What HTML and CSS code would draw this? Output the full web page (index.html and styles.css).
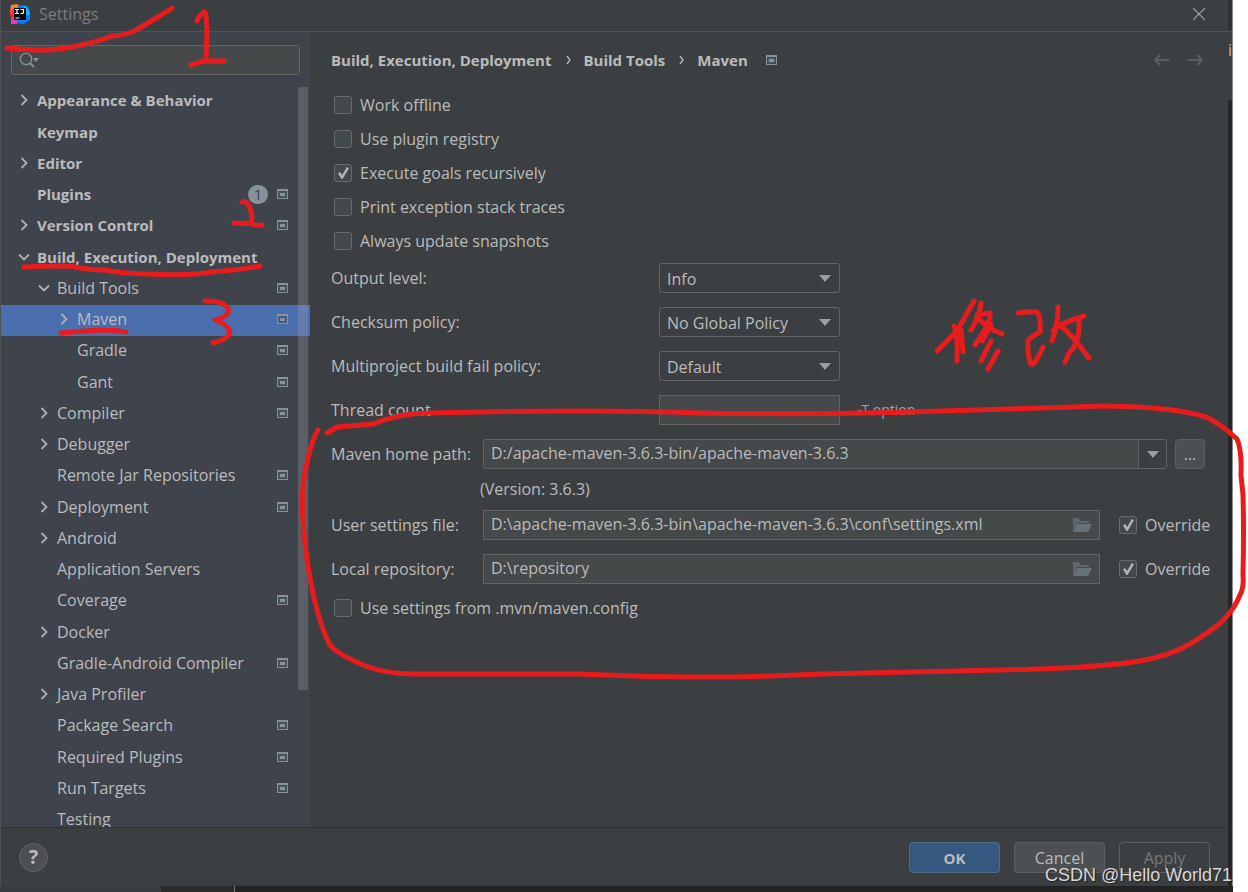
FILE: index.html
```
<!DOCTYPE html>
<html lang="en">
<head>
<meta charset="utf-8">
<title>Settings</title>
<link rel="stylesheet" href="styles.css">
</head>
<body>
<svg class="defs" aria-hidden="true">
  <symbol id="right" viewBox="0 0 12 12"><path d="M3.5 1l5 5-5 5" fill="none" stroke="currentColor" stroke-width="1.8"/></symbol>
  <symbol id="down" viewBox="0 0 12 12"><path d="M1 3.5l5 5 5-5" fill="none" stroke="currentColor" stroke-width="1.8"/></symbol>
  <symbol id="proj" viewBox="0 0 11 10"><path fill-rule="evenodd" d="M0 0h11v10H0zM1 2v7h9V2z" fill="#87939a"/><path d="M1.5 2.5h8v6h-8z" fill="#4a5660"/><path d="M3 4h5v3H3z" fill="#87939a"/></symbol>
  <symbol id="tri" viewBox="0 0 12 7"><path d="M0 0h12L6 7z" fill="#9c9fa1"/></symbol>
  <symbol id="folder" viewBox="0 0 19 14"><path d="M0 13V0h6l2 3h8v2H4z" fill="#5d686e"/><path d="M4 6h15l-4 8H0z" fill="#66727a"/></symbol>
</svg>
<div class="desktop">
  <main class="dialog">
    <header class="titlebar">
      <svg class="logo" viewBox="0 0 20 20"><path d="M1 1l6-1 5 3-4 7-7 2-1-4z" fill="#fc801d"/><path d="M0 8l5-5 3 14-6 2z" fill="#fe2857"/><path d="M1 14l8 2-2 4H1z" fill="#e13cc0"/><path d="M8 1l9 1 3 5v9l-7 4-6-1z" fill="#087cfa"/><path d="M13 1l5 3 2 6-3 2z" fill="#19b5f6"/><path d="M4 4h12v12H4z" fill="#0a0a0a"/><path d="M5 5.500h4M7 5.500v4M5 9.500h4M10.500 5.500h3v3q0 1-3 1M5.500 14h4" fill="none" stroke="#fff" stroke-width="1.200"/></svg>
      <h1>Settings</h1>
      <button class="close" aria-label="Close"><svg viewBox="0 0 12 12"><path d="M0 0l12 12M12 0L0 12" stroke="currentColor" stroke-width="1.2"/></svg></button>
    </header>
    <div class="middle">
      <aside class="sidebar">
        <div class="search">
          <svg viewBox="0 0 21 16"><circle cx="7" cy="7" r="5.7" fill="none" stroke="#87939a" stroke-width="1.3"/><path d="M11 11l4 4" stroke="#87939a" stroke-width="2"/><path d="M14 6h6l-3 4z" fill="#87939a"/></svg>
          <input type="text" aria-label="Search settings">
        </div>
        <ul class="tree">
          <li class="b"><svg class="ar"><use href="#right"/></svg><span>Appearance &amp; Behavior</span></li>
          <li class="b"><i class="ar"></i><span>Keymap</span></li>
          <li class="b"><svg class="ar"><use href="#right"/></svg><span>Editor</span></li>
          <li class="b"><i class="ar"></i><span>Plugins</span><em class="count">1</em><svg class="pj"><use href="#proj"/></svg></li>
          <li class="b"><svg class="ar"><use href="#right"/></svg><span>Version Control</span><svg class="pj"><use href="#proj"/></svg></li>
          <li class="b"><svg class="ar"><use href="#down"/></svg><span>Build, Execution, Deployment</span></li>
          <li class="l2"><svg class="ar"><use href="#down"/></svg><span>Build Tools</span><svg class="pj"><use href="#proj"/></svg></li>
          <li class="l3 sel"><svg class="ar"><use href="#right"/></svg><span>Maven</span><svg class="pj"><use href="#proj"/></svg></li>
          <li class="l3"><i class="ar"></i><span>Gradle</span><svg class="pj"><use href="#proj"/></svg></li>
          <li class="l3"><i class="ar"></i><span>Gant</span><svg class="pj"><use href="#proj"/></svg></li>
          <li class="l2"><svg class="ar"><use href="#right"/></svg><span>Compiler</span><svg class="pj"><use href="#proj"/></svg></li>
          <li class="l2"><svg class="ar"><use href="#right"/></svg><span>Debugger</span></li>
          <li class="l2"><i class="ar"></i><span>Remote Jar Repositories</span><svg class="pj"><use href="#proj"/></svg></li>
          <li class="l2"><svg class="ar"><use href="#right"/></svg><span>Deployment</span><svg class="pj"><use href="#proj"/></svg></li>
          <li class="l2"><svg class="ar"><use href="#right"/></svg><span>Android</span></li>
          <li class="l2"><i class="ar"></i><span>Application Servers</span></li>
          <li class="l2"><i class="ar"></i><span>Coverage</span><svg class="pj"><use href="#proj"/></svg></li>
          <li class="l2"><svg class="ar"><use href="#right"/></svg><span>Docker</span></li>
          <li class="l2"><i class="ar"></i><span>Gradle-Android Compiler</span><svg class="pj"><use href="#proj"/></svg></li>
          <li class="l2"><svg class="ar"><use href="#right"/></svg><span>Java Profiler</span></li>
          <li class="l2"><i class="ar"></i><span>Package Search</span><svg class="pj"><use href="#proj"/></svg></li>
          <li class="l2"><i class="ar"></i><span>Required Plugins</span><svg class="pj"><use href="#proj"/></svg></li>
          <li class="l2"><i class="ar"></i><span>Run Targets</span><svg class="pj"><use href="#proj"/></svg></li>
          <li class="l2"><i class="ar"></i><span>Testing</span></li>
        </ul>
        <div class="thumb"></div>
      </aside>
      <section class="content">
        <nav class="crumbs">
          <span>Build, Execution, Deployment</span><svg class="sep" viewBox="0 0 5 8"><path d="M1 0l3 4-3 4" fill="none" stroke="currentColor" stroke-width="1.3"/></svg>
          <span>Build Tools</span><svg class="sep" viewBox="0 0 5 8"><path d="M1 0l3 4-3 4" fill="none" stroke="currentColor" stroke-width="1.3"/></svg>
          <span>Maven</span><svg class="pj"><use href="#proj"/></svg>
          <button class="hist first" aria-label="Back"><svg viewBox="0 0 17 12"><path d="M16 6H2M7 1L2 6l5 5" fill="none" stroke="currentColor" stroke-width="2"/></svg></button>
          <button class="hist" aria-label="Forward"><svg viewBox="0 0 17 12"><path d="M1 6h14M10 1l5 5-5 5" fill="none" stroke="currentColor" stroke-width="2"/></svg></button>
        </nav>
        <div class="checks">
          <label class="check"><input type="checkbox"><span>Work offline</span></label>
          <label class="check"><input type="checkbox"><span>Use plugin registry</span></label>
          <label class="check"><input type="checkbox" checked><span>Execute goals recursively</span></label>
          <label class="check"><input type="checkbox"><span>Print exception stack traces</span></label>
          <label class="check"><input type="checkbox"><span>Always update snapshots</span></label>
        </div>
        <div class="policies">
          <label for="level">Output level:</label>
          <div class="pick"><select id="level"><option>Info</option></select><svg class="tri"><use href="#tri"/></svg></div>
          <label for="sum">Checksum policy:</label>
          <div class="pick"><select id="sum"><option>No Global Policy</option></select><svg class="tri"><use href="#tri"/></svg></div>
          <label for="fail">Multiproject build fail policy:</label>
          <div class="pick"><select id="fail"><option>Default</option></select><svg class="tri"><use href="#tri"/></svg></div>
          <label for="threads">Thread count</label>
          <div class="threads"><input id="threads" class="field" type="text"><small>-T option</small></div>
        </div>
        <div class="paths">
          <label for="home">Maven home path:</label>
          <div class="line">
            <div class="combo"><input id="home" type="text" value="D:/apache-maven-3.6.3-bin/apache-maven-3.6.3"><button aria-label="Show list"><svg class="tri"><use href="#tri"/></svg></button></div>
            <button class="more" aria-label="Browse">...</button>
          </div>
          <p class="version">(Version: 3.6.3)</p>
          <label for="file">User settings file:</label>
          <div class="line">
            <div class="browse"><input id="file" type="text" value="D:\apache-maven-3.6.3-bin\apache-maven-3.6.3\conf\settings.xml"><svg><use href="#folder"/></svg></div>
            <label class="check"><input type="checkbox" checked><span>Override</span></label>
          </div>
          <label for="repo">Local repository:</label>
          <div class="line">
            <div class="browse"><input id="repo" type="text" value="D:\repository"><svg><use href="#folder"/></svg></div>
            <label class="check"><input type="checkbox" checked><span>Override</span></label>
          </div>
        </div>
        <label class="check last"><input type="checkbox"><span>Use settings from .mvn/maven.config</span></label>
      </section>
    </div>
    <footer class="footer">
      <button class="help" aria-label="Help">?</button>
      <button class="btn ok">OK</button>
      <button class="btn">Cancel</button>
      <button class="btn apply" disabled>Apply</button>
    </footer>
  </main>
  <div class="edge"><span>i</span></div>
  <div class="taskbar"></div>
  <div class="watermark">CSDN @Hello World71</div>
</div>
<svg class="ink" viewBox="0 0 1248 892" aria-hidden="true">
  <path d="M7 48Q45 52 66 48Q95 43 112 36Q128 35 136 30L158 17Q168 11 172 8"/>
  <path d="M197 21Q201 12 205 12Q208 18 206 60M191 65Q202 61 208 61H224"/>
  <path d="M242 202Q248 200 250 209Q254 219 250 223M234 223Q244 224 250 223Q254 226 262 225"/>
  <path d="M24 267Q62 265 75 267Q88 270 105 270Q125 274 150 274Q190 276 211 272Q240 270 260 266"/>
  <path d="M205 301Q222 300 228 308Q231 316 215 320Q229 325 230 333Q228 339 213 343"/>
  <path d="M61 333Q81 331 100 330Q116 330 126 332"/>
  <path d="M937 351L957 331Q967 313 974 301M954 326Q958 334 957 361M961 330L963 352M981 303Q980 315 971 330M977 315L990 313Q992 320 975 345M979 319Q989 329 1002 334M991 324L982 341M991 341L981 361M998 351L988 369"/>
  <path d="M1018 313Q1033 311 1037 312Q1041 316 1040 332Q1029 338 1028 341Q1027 350 1030 363Q1033 369 1043 347M1058 307Q1058 325 1052 341M1053 330Q1061 323 1084 316M1079 321Q1080 343 1069 353L1065 362M1060 325Q1073 336 1089 358"/>
  <path d="M318 430Q311 441 306 468Q301 487 303 520Q305 555 312 588Q319 624 330 645Q338 655 366 666Q385 674 415 674H580Q700 680 820 674L1000 670Q1105 668 1145 660Q1180 653 1202 636Q1230 620 1240 595Q1244 588 1243 575Q1244 530 1243 495L1241 475Q1242 450 1237 439Q1222 425 1206 417Q1175 407 1106 406L940 411Q830 415 700 413Q590 409 428 413Q400 413 373 424L337 427Q332 430 327 433"/>
</svg>
</body>
</html>
```
FILE: styles.css
```
* { box-sizing: border-box; }
body { margin: 0; background: #fff; color: #bbb; font: 16px/20px "Open Sans", "Noto Sans", sans-serif; }
button, input, select { font: inherit; color: inherit; margin: 0; padding: 0; }
.defs { display: none; }
.desktop { position: relative; display: grid; grid-template-columns: minmax(0, 1fr) 5px; grid-template-rows: minmax(0, 1fr) 6px; height: 100vh; margin-right: 15px; background: #2b2b2b; }
.dialog { display: flex; flex-direction: column; min-height: 0; background: #3c3f41; border-left: 1px solid #515151; }
.edge { background: linear-gradient(#303234 30px, #55585a 31px, #3c3f41 32px, #3c3f41 100px, #262626 101px); border-right: 1px solid #8a8a8a; overflow: hidden; padding-top: 40px; color: #c9b795; }
.taskbar { grid-column: 1 / 3; background: linear-gradient(90deg, #3a3d3f 161px, #2b2b2b 161px, #2b2b2b 234px, #777 234px, #777 235px, #232323 235px); }

.titlebar { display: flex; align-items: center; height: 32px; padding: 0 23px 4px 9px; border-bottom: 1px solid #515456; color: #7b7d7e; flex: none; }
.logo { width: 20px; height: 20px; }
.titlebar h1 { margin: 0 auto 0 9px; font-size: 16px; font-weight: 400; }
.close { width: 12px; height: 12px; border: 0; background: none; color: #a5a6a7; display: flex; }
.close svg { width: 12px; height: 12px; }

.middle { flex: 1; min-height: 0; display: flex; }
.sidebar { position: relative; width: 309px; background: #3f434c; overflow: hidden; flex: none; }
.search { display: flex; align-items: center; margin: 13px 10px 11px; height: 30px; padding: 0 7px; background: #45494a; border: 1px solid #646464; border-radius: 3px; }
.search svg { width: 21px; height: 16px; }
.search input { flex: 1; min-width: 0; border: 0; background: none; outline: 0; }
.tree { list-style: none; margin: 0; padding: 0; }
.tree li { display: flex; align-items: center; height: 31px; padding: 0 22px 3px 17px; white-space: nowrap; }
.tree li:nth-child(4n+2) { height: 32px; }
.tree .b { font-size: 15px; font-weight: 700; }
.tree .l2 { padding-left: 37px; }
.tree .l3 { padding-left: 57px; }
.tree .sel { background: #4b6eaf; }
.ar { width: 12px; height: 12px; margin-right: 7px; color: #adb0b3; flex: none; }
.tree span { margin-right: auto; }
.pj { width: 11px; height: 10px; flex: none; }
.count { width: 20px; height: 19px; margin-right: 9px; border-radius: 10px; background: #87939a; color: #3f434c; font-size: 15px; font-style: normal; font-weight: 400; line-height: 19px; text-align: center; }
.thumb { position: absolute; right: 2px; top: 55px; width: 10px; height: 603px; background: rgba(166, 166, 166, .28); }

.content { flex: 1; min-width: 0; padding: 13px 21px 0 21px; }
.crumbs { display: flex; align-items: center; height: 30px; margin-bottom: 13px; font-size: 15px; font-weight: 700; }
.sep { width: 5px; height: 8px; margin: 0 13px 0 14px; }
.crumbs .pj { margin-left: 18px; }
.hist { display: flex; margin: 0 3px 0 17px; border: 0; background: none; color: #5c5e60; }
.hist.first { margin: 0 0 0 auto; }
.hist svg { width: 17px; height: 12px; }
.check { display: flex; align-items: center; height: 34px; white-space: nowrap; }
.check input { appearance: none; width: 18px; height: 18px; margin: 0 8px 0 3px; border: 1px solid #6b6b6b; border-radius: 3px; background: #43494a; flex: none; }
.check input:checked::after { content: ""; display: block; width: 11px; height: 12px; margin: 2px 0 0 3px; background: #b2b4b5; clip-path: polygon(0 55%, 18% 42%, 38% 66%, 80% 0, 100% 10%, 42% 100%, 32% 100%); }
.policies { display: grid; grid-template-columns: 328px minmax(0, 1fr); gap: 14px 0; margin: 5px 0 14px; }
.policies > label { height: 30px; line-height: 30px; }
.pick { position: relative; width: 181px; height: 30px; }
.pick select { appearance: none; width: 100%; height: 30px; padding: 1px 7px 0; border: 1px solid #646464; border-radius: 3px; background: #3c3f41; outline: 0; }
.tri { width: 12px; height: 7px; }
.pick .tri { position: absolute; right: 9px; top: 12px; pointer-events: none; }
.threads { display: flex; align-items: center; }
.field { width: 181px; height: 30px; border: 1px solid #646464; background: #45494a; }
.threads small { margin-left: 17px; font-size: 14px; color: #a0a2a3; }
.paths { display: grid; grid-template-columns: 152px minmax(0, 1fr); row-gap: 14px; }
.paths > label { height: 30px; line-height: 30px; }
.line { display: flex; height: 30px; }
.combo, .browse { display: flex; flex: 1; min-width: 0; border: 1px solid #646464; background: #45494a; }
.combo { border-radius: 3px; overflow: hidden; }
.combo input, .browse input { flex: 1; min-width: 0; border: 0; padding: 0 7px 2px; background: none; outline: 0; }
.combo button { display: flex; align-items: center; justify-content: center; width: 28px; border: 0; border-left: 1px solid #646464; background: #3c3f41; }
.more { width: 30px; margin: 0 2px 0 8px; border: 1px solid #5e6060; border-radius: 4px; background: #4c5052; }
.version { grid-column: 2; height: 28px; margin: -8px 0 -7px -3px; line-height: 28px; }
.browse { align-items: center; padding-right: 7px; }
.browse svg { width: 19px; height: 14px; }
.line .check { height: 30px; margin-left: 16px; width: 91px; }
.last { margin-top: 7px; }

.footer { display: flex; align-items: center; gap: 14px; height: 59px; padding: 0 18px; border-top: 1px solid #2f3133; flex: none; }
.help { width: 29px; height: 29px; margin-right: auto; border: 1px solid #666; border-radius: 50%; background: #4c5052; font-size: 20px; font-weight: 700; }
.btn { width: 91px; height: 31px; padding-top: 1px; border: 1px solid #5e6060; border-radius: 4px; background: #4c5052; }
.ok { background: #365880; border-color: #4c708c; font-size: 15px; font-weight: 700; }
.apply { background: none; color: #777; }
.watermark { position: absolute; right: 1px; bottom: 6px; font: 18px/22px "Liberation Sans", sans-serif; color: #d8d8d8; text-shadow: 1px 1px 1px #222; white-space: nowrap; }
.ink { position: absolute; left: 0; top: 0; width: 1248px; height: 892px; fill: none; stroke: #e81c1c; stroke-width: 5; stroke-linecap: round; stroke-linejoin: round; pointer-events: none; }
```
